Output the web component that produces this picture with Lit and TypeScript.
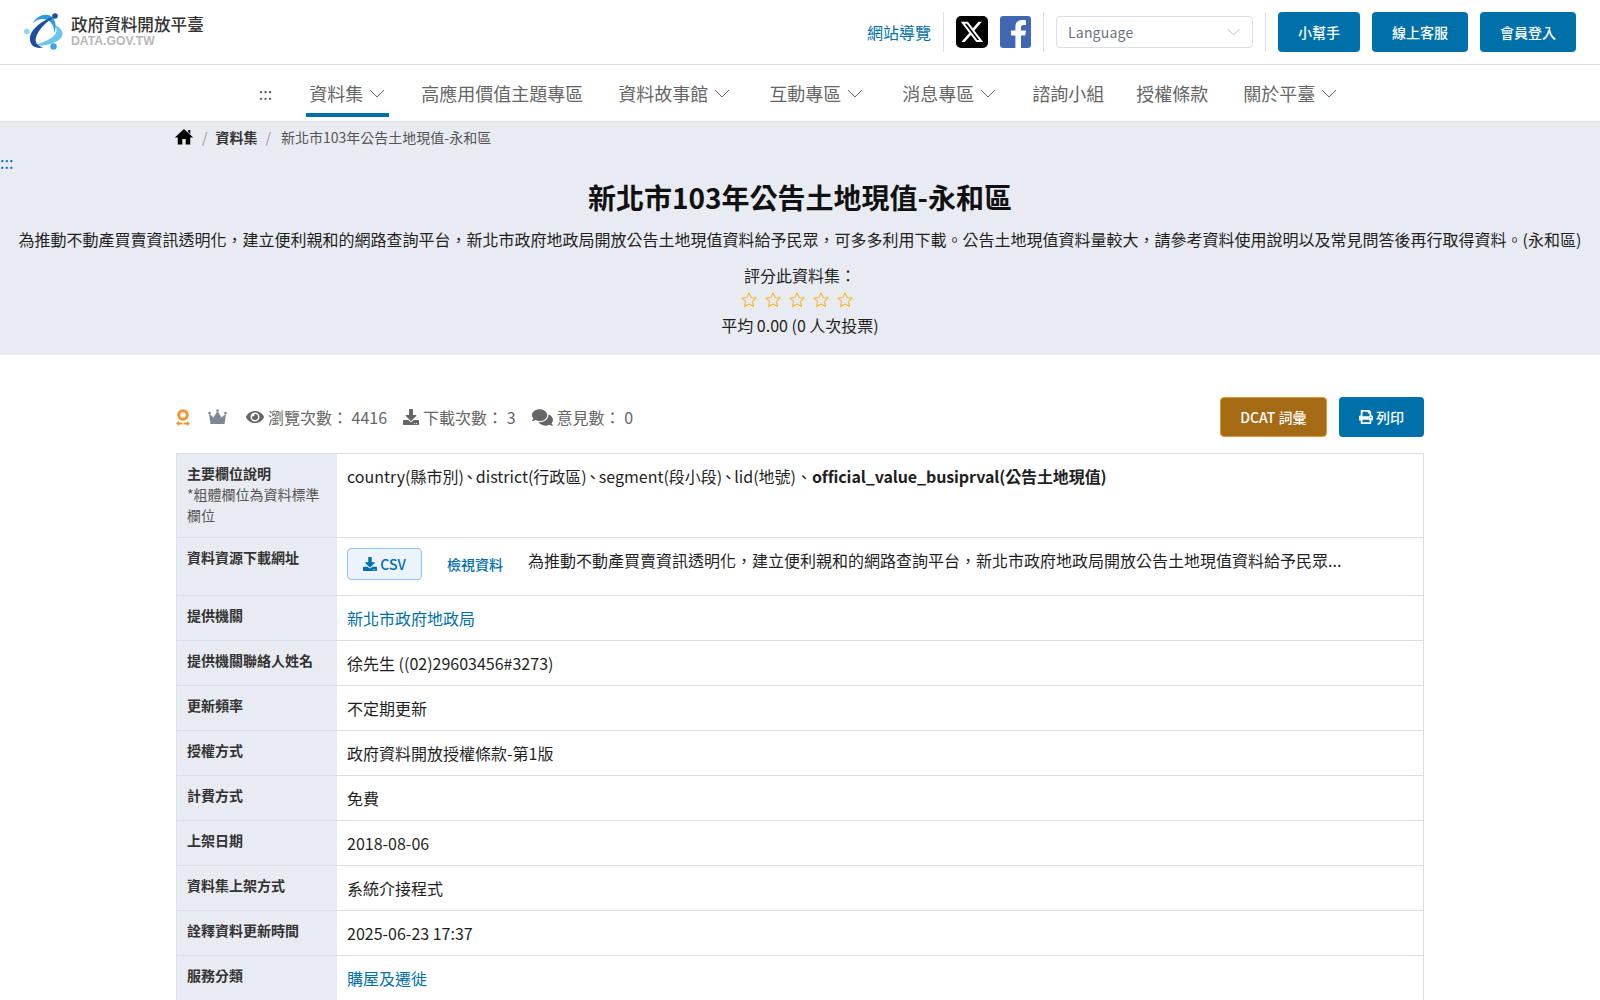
import { LitElement, css, html, svg } from 'lit';
import { customElement } from 'lit/decorators.js';

const ICONS = {
    home: { box: '0 0 24 24', d: 'M10 21v-6.500h4V21h5.500v-8.500H23L12 2.500 1 12.500h3.500V21zM17 3.500h2.500v5L17 6z' },
    eye: { box: '0 0 576 512', d: 'M572.52 241.4C518.29 135.59 410.93 64 288 64S57.68 135.64 3.48 241.41a32.35 32.35 0 0 0 0 29.19C57.71 376.41 165.07 448 288 448s230.32-71.64 284.52-177.41a32.35 32.35 0 0 0 0-29.19zM288 400a144 144 0 1 1 144-144 143.93 143.93 0 0 1-144 144zm0-240a95.31 95.31 0 0 0-25.31 3.79 47.85 47.85 0 0 1-66.9 66.9A95.78 95.78 0 1 0 288 160z' },
    download: { box: '0 0 512 512', d: 'M216 0h80c13.3 0 24 10.7 24 24v168h87.7c17.8 0 26.7 21.5 14.1 34.1L269.7 378.3c-7.5 7.5-19.8 7.5-27.3 0L90.1 226.1c-12.6-12.6-3.7-34.1 14.1-34.1H192V24c0-13.3 10.7-24 24-24zm296 376v112c0 13.3-10.7 24-24 24H24c-13.3 0-24-10.7-24-24V376c0-13.3 10.7-24 24-24h146.7l49 49c20.1 20.1 52.5 20.1 72.6 0l49-49H488c13.3 0 24 10.7 24 24zm-124 88c0-11-9-20-20-20s-20 9-20 20 9 20 20 20 20-9 20-20zm64 0c0-11-9-20-20-20s-20 9-20 20 9 20 20 20 20-9 20-20z' },
    comments: { box: '0 0 576 512', d: 'M416 192c0-88.4-93.1-160-208-160S0 103.6 0 192c0 34.3 14.1 65.9 38 92-13.4 30.2-35.5 54.2-35.8 54.5-2.2 2.3-2.8 5.7-1.5 8.7S4.8 352 8 352c36.6 0 66.9-12.3 88.7-25 32.2 15.7 70.3 25 111.3 25 114.9 0 208-71.6 208-160zm122 220c23.9-26 38-57.7 38-92 0-66.9-53.5-124.2-129.3-148.1.9 6.6 1.3 13.3 1.3 20.1 0 105.9-107.7 192-240 192-10.8 0-21.3-.8-31.7-1.9C207.8 439.6 281.8 480 368 480c41 0 79.1-9.2 111.3-25 21.8 12.7 52.1 25 88.7 25 3.2 0 6.1-1.9 7.3-4.8 1.3-2.9.7-6.3-1.5-8.7-.3-.3-22.4-24.2-35.8-54.5z' },
    print: { box: '0 0 512 512', d: 'M448 192V77.25c0-8.49-3.37-16.62-9.37-22.63L393.37 9.37c-6-6-14.14-9.37-22.63-9.37H96C78.33 0 64 14.33 64 32v160c-35.35 0-64 28.65-64 64v112c0 8.84 7.16 16 16 16h48v96c0 17.67 14.33 32 32 32h320c17.67 0 32-14.33 32-32v-96h48c8.84 0 16-7.16 16-16V256c0-35.35-28.65-64-64-64zm-64 256H128v-96h256v96zm0-224H128V64h192v48c0 8.84 7.16 16 16 16h48v96zm48 72c-13.25 0-24-10.75-24-24 0-13.26 10.75-24 24-24s24 10.74 24 24c0 13.25-10.75 24-24 24z' },
};

const icon = (name: keyof typeof ICONS, size: number) => html`
    <svg class="ico" width=${size} height=${size} viewBox=${ICONS[name].box} fill="currentColor"><path d=${ICONS[name].d}></path></svg>
`;

const chevron = svg`<path d="M1 1l7 7 7-7" fill="none" stroke="currentColor" stroke-width="1"></path>`;

// The spacing after each menu item is not uniform in the reference
const NAV = [
    { label: '資料集', drop: true, active: true, space: 'm29' },
    { label: '高應用價值主題專區', space: 'm28' },
    { label: '資料故事館', drop: true, space: 'm32' },
    { label: '互動專區', drop: true, space: 'm32' },
    { label: '消息專區', drop: true, space: 'm29' },
    { label: '諮詢小組', space: 'm25' },
    { label: '授權條款', space: 'm28' },
    { label: '關於平臺', drop: true, space: 'm0' },
];

const ROWS = [
    { label: '提供機關', value: '新北市政府地政局', link: true },
    { label: '提供機關聯絡人姓名', value: '徐先生 ((02)29603456#3273)' },
    { label: '更新頻率', value: '不定期更新' },
    { label: '授權方式', value: '政府資料開放授權條款-第1版' },
    { label: '計費方式', value: '免費' },
    { label: '上架日期', value: '2018-08-06' },
    { label: '資料集上架方式', value: '系統介接程式' },
    { label: '詮釋資料更新時間', value: '2025-06-23 17:37' },
    { label: '服務分類', value: '購屋及遷徙', link: true },
];

@customElement('app-root')
export class AppRoot extends LitElement {
    static styles = css`
        :host{
            display: block;
            font-family: "Noto Sans CJK TC", "Noto Sans", sans-serif;
            font-size: 16px;
            line-height: 1.5;
            color: #1f1f1f;
            background: #fff;
        }

        a{
            color: #0070ab;
            text-decoration: none;
        }

        .ico{
            display: block;
            flex: none;
        }

        /* top bar */
        .top{
            display: flex;
            align-items: center;
            justify-content: space-between;
            height: 64px;
            padding: 0 24px;
            border-bottom: 1px solid #dcdfe8;
        }

        .logo{
            display: flex;
            align-items: center;
            gap: 8px;
        }

        .logo-text{
            display: flex;
            flex-direction: column;
            margin-top: -3px;
        }

        .logo-name{
            font-size: 16.6px;
            line-height: 20px;
            font-weight: 500;
            color: #333;
        }

        .logo-sub{
            font-family: "Liberation Sans", sans-serif;
            font-size: 12.2px;
            line-height: 14px;
            font-weight: 700;
            color: #b8b8b8;
        }

        .tools{
            display: flex;
            align-items: center;
        }

        .sitemap{
            margin-right: 12px;
        }

        .sep{
            width: 1px;
            height: 40px;
            background: #dcdfe8;
        }

        .social{
            display: flex;
            gap: 12px;
            padding: 0 12px;
        }

        .social svg{
            display: block;
        }

        .lang{
            display: flex;
            align-items: center;
            justify-content: space-between;
            box-sizing: border-box;
            width: 197px;
            height: 32px;
            margin: 0 12px;
            padding: 0 12px 0 11px;
            border: 1px solid #dcdfe8;
            border-radius: 4px;
            font-size: 14px;
            letter-spacing: 0.2px;
            color: #6c7280;
        }

        .lang svg{
            color: #a9adb8;
        }

        .btns{
            display: flex;
            gap: 12px;
            margin-left: 12px;
        }

        .btn{
            display: flex;
            align-items: center;
            justify-content: center;
            gap: 3px;
            box-sizing: border-box;
            height: 40px;
            padding: 0 20px;
            border-radius: 4px;
            background: #0070ab;
            color: #fff;
            font-size: 14px;
            font-weight: 500;
        }

        .btn.gold{
            padding: 0 19.5px;
            background: #a56a14;
            border: 1px solid #dc9a36;
        }

        /* main menu */
        .nav{
            display: flex;
            justify-content: center;
            align-items: flex-start;
            box-sizing: border-box;
            height: 57px;
            border-bottom: 1px solid #dcdfe8;
            font-size: 18px;
            color: #666;
        }

        .nav-dots{
            display: flex;
            align-items: center;
            height: 56px;
            margin-right: 34px;
            font-size: 16px;
            color: #555;
        }

        .nav-item{
            display: flex;
            align-items: center;
            gap: 6px;
            box-sizing: border-box;
            height: 52px;
            padding: 8px 4px 0 3px;
            border-bottom: 4px solid transparent;
        }

        .nav-item.active{
            border-bottom-color: #0070ab;
        }

        .nav-item svg{
            display: block;
        }

        .m0{ margin-right: 0; }
        .m25{ margin-right: 25px; }
        .m28{ margin-right: 28px; }
        .m29{ margin-right: 29px; }
        .m32{ margin-right: 32px; }

        /* gray band */
        .band{
            height: 233px;
            background: #e8ebf1;
            text-align: center;
        }

        .crumbs{
            display: flex;
            align-items: center;
            gap: 7px;
            width: 1248px;
            height: 30px;
            margin: 0 auto;
            font-size: 14px;
            color: #555;
        }

        .crumbs .home{
            color: #000;
            margin: 0 0 0 -2px;
        }

        .crumbs .slash{
            color: #999;
            margin: 0 1px;
        }

        .crumbs .slash.last{
            margin-right: 3px;
        }

        .crumbs b{
            color: #333;
        }

        .skip{
            height: 20px;
            text-align: left;
            font-size: 16px;
            line-height: 20px;
            color: #0070ab;
        }

        h1{
            margin: 5px 0 10px;
            font-size: 28px;
            line-height: 40px;
            font-weight: 700;
            color: #111;
        }

        .intro{
            margin: 0;
            line-height: 24px;
            white-space: nowrap;
        }

        .rate{
            margin-top: 12px;
            line-height: 24px;
        }

        .stars{
            display: flex;
            justify-content: center;
            gap: 6px;
            height: 26px;
            margin-left: -6px;
            align-items: center;
        }

        .stars svg{
            display: block;
        }

        /* content */
        .content{
            width: 1248px;
            margin: 0 auto;
            padding-top: 42px;
        }

        .stats-row{
            display: flex;
            align-items: center;
            justify-content: space-between;
            margin-bottom: 16px;
        }

        .stats{
            display: flex;
            align-items: center;
            color: #666;
        }

        .stat{
            display: flex;
            align-items: center;
            gap: 4px;
            margin-right: 16px;
        }

        .award{
            margin-right: 18px;
        }

        .crown{
            margin-right: 19px;
            color: #7f8694;
        }

        .actions{
            display: flex;
            gap: 12px;
        }

        .table{
            border: 1px solid #dcdfe8;
            border-bottom: 0;
        }

        .row{
            display: grid;
            grid-template-columns: 160px 1fr;
            border-bottom: 1px solid #dcdfe8;
        }

        .label{
            padding: 9px 10px 11px;
            background: #e8ebf1;
            font-size: 14px;
            line-height: 21px;
            color: #555;
        }

        .label b{
            display: block;
            color: #333;
        }

        .value{
            padding: 10px;
            line-height: 24px;
        }

        .value b{
            font-weight: 700;
            letter-spacing: -0.1px;
        }

        .dun{
            margin: 0 -2px;
        }

        .files{
            display: flex;
            align-items: flex-start;
        }

        .csv{
            display: flex;
            align-items: center;
            justify-content: center;
            gap: 3px;
            box-sizing: border-box;
            width: 75px;
            height: 32px;
            margin-bottom: 5px;
            border: 1px solid #93c6f2;
            border-radius: 4px;
            background: #ebf3fd;
            color: #0070ab;
            font-size: 14px;
            font-weight: 500;
        }

        .view{
            margin: 6px 25px 0;
            font-size: 14px;
            line-height: 21px;
            font-weight: 500;
        }
    `;

    render() {
        return html`
            <header class="top">
                <div class="logo">
                    <svg width="39" height="38" viewBox="0 0 39 38">
                        <path d="M11 32C22 34 39 29 38.500 20 38 16 34 13 30 11.500 34 16 33 20 29 23.500 25 27 18 30 11 32z" fill="#6ac6ea"></path>
                        <path d="M9 10C13 2 24 -1 29 5 32 9 32.500 15 30 20 30.500 14 28 9 23 7 18 5 13 6.500 9 10z" fill="#2e9bdc"></path>
                        <path d="M31 3.500C18 7 5 17 6 27 6.500 33 12 36 19 34.500 13.500 33 10.500 29 12 24.500 14 17 22 9 31 3.500z" fill="#1d4f9e"></path>
                        <circle cx="31" cy="3" r="2.800" fill="#274f9f"></circle>
                        <circle cx="2.800" cy="18.500" r="2.800" fill="#8fd4f2"></circle>
                        <circle cx="29.500" cy="33.500" r="3.200" fill="#3aa5e0"></circle>
                    </svg>
                    <div class="logo-text">
                        <span class="logo-name">政府資料開放平臺</span>
                        <span class="logo-sub">DATA.GOV.TW</span>
                    </div>
                </div>
                <div class="tools">
                    <a class="sitemap" href="#">網站導覽</a>
                    <span class="sep"></span>
                    <div class="social">
                        <svg width="32" height="32" viewBox="0 0 32 32">
                            <rect width="32" height="32" rx="5" fill="#000"></rect>
                            <g transform="translate(3.5 3.5) scale(1.04)"><path fill="#fff" d="M18.244 2.25h3.308l-7.227 8.26 8.502 11.24H16.17l-5.214-6.817L4.99 21.75H1.68l7.73-8.835L1.254 2.25H8.08l4.713 6.231zm-1.161 17.52h1.833L7.084 4.126H5.117z"></path></g>
                        </svg>
                        <svg width="31" height="32" viewBox="0 0 31 32">
                            <rect width="31" height="32" rx="3" fill="#4267b2"></rect>
                            <path fill="#fff" d="M21 32V19.5h4.200l.8-5h-5v-3c0-1.500.6-2.600 2.700-2.600H26V4.300c-.6-.1-2.200-.3-4-.3-4 0-6.600 2.400-6.600 6.900v3.600H11v5h4.400V32z"></path>
                        </svg>
                    </div>
                    <span class="sep"></span>
                    <div class="lang">
                        <span>Language</span>
                        <svg width="13" height="8" viewBox="0 0 16 9">${chevron}</svg>
                    </div>
                    <span class="sep"></span>
                    <div class="btns">
                        <a class="btn" href="#">小幫手</a>
                        <a class="btn" href="#">線上客服</a>
                        <a class="btn" href="#">會員登入</a>
                    </div>
                </div>
            </header>

            <nav class="nav">
                <span class="nav-dots">:::</span>
                ${NAV.map(item => html`
                    <div class="nav-item ${item.space} ${item.active ? 'active' : ''}">
                        <span>${item.label}</span>
                        ${item.drop ? html`<svg width="16" height="9" viewBox="0 0 16 9">${chevron}</svg>` : null}
                    </div>
                `)}
            </nav>

            <section class="band">
                <div class="crumbs">
                    <span class="home">${icon('home', 20)}</span>
                    <span class="slash">/</span>
                    <b>資料集</b>
                    <span class="slash last">/</span>
                    <span>新北市103年公告土地現值-永和區</span>
                </div>
                <div class="skip"><a href="#">:::</a></div>
                <h1>新北市103年公告土地現值-永和區</h1>
                <p class="intro">為推動不動產買賣資訊透明化&#xFF0C;建立便利親和的網路查詢平台&#xFF0C;新北市政府地政局開放公告土地現值資料給予民眾&#xFF0C;可多多利用下載。公告土地現值資料量較大&#xFF0C;請參考資料使用說明以及常見問答後再行取得資料。(永和區)</p>
                <div class="rate">評分此資料集&#xFF1A;</div>
                <div class="stars">
                    ${[0, 1, 2, 3, 4].map(() => html`
                        <svg width="18" height="18" viewBox="0 0 24 24"><path d="M12 2.500l2.900 6.200 6.700.8-5 4.600 1.400 6.700-6-3.400-6 3.400 1.400-6.700-5-4.600 6.700-.8z" fill="none" stroke="#f6b92e" stroke-width="1.500" stroke-linejoin="round"></path></svg>
                    `)}
                </div>
                <div>平均 0.00 (0 人次投票)</div>
            </section>

            <main class="content">
                <div class="stats-row">
                    <div class="stats">
                        <svg class="ico award" width="14" height="17" viewBox="0 0 14 17">
                            <circle cx="7" cy="6" r="4.300" fill="none" stroke="#f0962e" stroke-width="3"></circle>
                            <path d="M0 14.500l3-2.500v1.500h3.400v2H3V17zM14 14.500L11 12v1.500H7.600v2H11V17z" fill="#f0962e"></path>
                        </svg>
                        <svg class="ico crown" width="19" height="16" viewBox="0 0 19 16">
                            <circle cx="1.500" cy="4" r="1.300" fill="currentColor"></circle>
                            <circle cx="9.500" cy="1.500" r="1.300" fill="currentColor"></circle>
                            <circle cx="17.500" cy="4" r="1.300" fill="currentColor"></circle>
                            <path d="M1 4.500l4.500 4L9.500 2l4 6.500 4.500-4-1.500 10.500h-14z" fill="currentColor"></path>
                        </svg>
                        <span class="stat">${icon('eye', 18)}瀏覽次數&#xFF1A; 4416</span>
                        <span class="stat">${icon('download', 16)}下載次數&#xFF1A; 3</span>
                        <span class="stat">${icon('comments', 21)}意見數&#xFF1A; 0</span>
                    </div>
                    <div class="actions">
                        <a class="btn gold" href="#">DCAT 詞彙</a>
                        <a class="btn" href="#">${icon('print', 14)}列印</a>
                    </div>
                </div>

                <div class="table">
                    <div class="row">
                        <div class="label"><b>主要欄位說明</b>*粗體欄位為資料標準欄位</div>
                        <div class="value">country(縣市別)<span class="dun">、</span>district(行政區)<span class="dun">、</span>segment(段小段)<span class="dun">、</span>lid(地號)、<b>official_value_busiprval(公告土地現值)</b></div>
                    </div>
                    <div class="row">
                        <div class="label"><b>資料資源下載網址</b></div>
                        <div class="value files">
                            <a class="csv" href="#">${icon('download', 14)}CSV</a>
                            <a class="view" href="#">檢視資料</a>
                            <span>為推動不動產買賣資訊透明化&#xFF0C;建立便利親和的網路查詢平台&#xFF0C;新北市政府地政局開放公告土地現值資料給予民眾...</span>
                        </div>
                    </div>
                    ${ROWS.map(row => html`
                        <div class="row">
                            <div class="label"><b>${row.label}</b></div>
                            <div class="value">${row.link ? html`<a href="#">${row.value}</a>` : row.value}</div>
                        </div>
                    `)}
                </div>
            </main>
        `;
    }
}
